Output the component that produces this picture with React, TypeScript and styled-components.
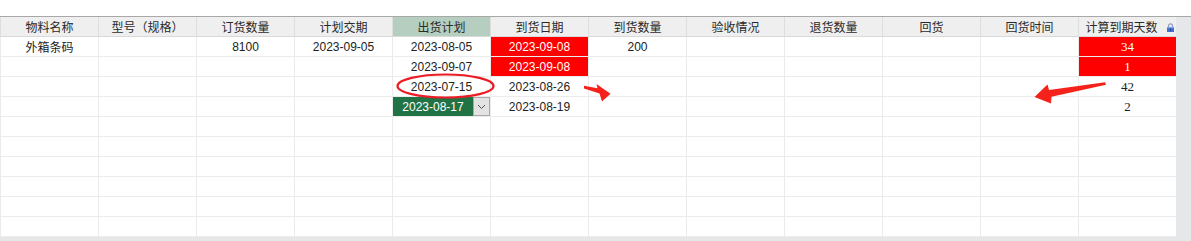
import React from "react";
import styled, { createGlobalStyle } from "styled-components";

const GlobalStyle = createGlobalStyle`
  html, body {
    margin: 0;
    padding: 0;
    background: #ffffff;
  }
  body {
    font-family: "Liberation Sans", "Noto Sans CJK SC", sans-serif;
  }
`;

type CellData = {
  text?: string;
  alert?: boolean;
  serif?: boolean;
  editor?: boolean;
};

const headers = [
  "物料名称",
  "型号（规格）",
  "订货数量",
  "计划交期",
  "出货计划",
  "到货日期",
  "到货数量",
  "验收情况",
  "退货数量",
  "回货",
  "回货时间",
  "计算到期天数",
];

const filled: CellData[][] = [
  [
    { text: "外箱条码" },
    {},
    { text: "8100" },
    { text: "2023-09-05" },
    { text: "2023-08-05" },
    { text: "2023-09-08", alert: true },
    { text: "200" },
    {},
    {},
    {},
    {},
    { text: "34", alert: true, serif: true },
  ],
  [
    {},
    {},
    {},
    {},
    { text: "2023-09-07" },
    { text: "2023-09-08", alert: true },
    {},
    {},
    {},
    {},
    {},
    { text: "1", alert: true, serif: true },
  ],
  [
    {},
    {},
    {},
    {},
    { text: "2023-07-15" },
    { text: "2023-08-26" },
    {},
    {},
    {},
    {},
    {},
    { text: "42", serif: true },
  ],
  [
    {},
    {},
    {},
    {},
    { text: "2023-08-17", editor: true },
    { text: "2023-08-19" },
    {},
    {},
    {},
    {},
    {},
    { text: "2", serif: true },
  ],
];

const emptyRow: CellData[] = headers.map(() => ({}));
const rows: CellData[][] = [
  ...filled,
  ...Array.from({ length: 6 }, () => emptyRow),
];

const LockIcon = () => (
  <svg width="9" height="9" viewBox="0 0 9 9">
    <path
      d="M2.5 4.5V2.8a2 2 0 0 1 4 0v1.7"
      fill="none"
      stroke="#8ea0c8"
      strokeWidth="1.3"
    />
    <rect x="1" y="4" width="7" height="5" fill="#3f6fd0" />
    <rect x="1" y="4" width="7" height="1.2" fill="#7da0e8" />
    <rect x="4" y="5.8" width="1" height="2" fill="#1c3f8c" />
  </svg>
);

const App = () => {
  return (
    <Page>
      <GlobalStyle />
      <TopStrip />
      <Frame>
        <Grid>
          {headers.map((h, i) => (
            <HeaderCell key={h} $active={i === 4} $locked={i === 11}>
              {h}
              {i === 11 && (
                <Lock>
                  <LockIcon />
                </Lock>
              )}
            </HeaderCell>
          ))}
          {rows.map((row, r) =>
            row.map((c, i) =>
              c.editor ? (
                <Cell key={`${r}-${i}`}>
                  <Editor>
                    <EditValue>{c.text}</EditValue>
                    <DropButton>
                      <svg width="9" height="6" viewBox="0 0 9 6">
                        <path
                          d="M1 1l3.5 3.5L8 1"
                          fill="none"
                          stroke="#555"
                          strokeWidth="1"
                        />
                      </svg>
                    </DropButton>
                  </Editor>
                </Cell>
              ) : (
                <Cell
                  key={`${r}-${i}`}
                  $alert={c.alert}
                  $serif={c.serif}
                  $cjk={i === 0}
                >
                  {c.text}
                </Cell>
              )
            )
          )}
        </Grid>
      </Frame>
      <Marks viewBox="0 0 1191 241" width="1191" height="241">
        <ellipse
          cx="445.5"
          cy="86"
          rx="48"
          ry="11.5"
          fill="none"
          stroke="#ec1c24"
          strokeWidth="2.2"
        />
        <polygon
          points="584,85.8 597.5,88.2 596.5,84 610.5,93.8 602,101.5 599.5,93.5 584,88.6"
          fill="#f5221b"
        />
        <polygon
          points="1105,82.3 1106,84.8 1051.5,96.8 1051,103.5 1034.5,97 1047.5,84.6 1049,90"
          fill="#f5221b"
        />
      </Marks>
    </Page>
  );
};

export default App;

const Page = styled.div`
  position: relative;
  width: 1191px;
  height: 241px;
  overflow: hidden;
`;

const TopStrip = styled.div`
  height: 16px;
  background: #ffffff;
`;

const Frame = styled.div`
  display: flex;
  align-items: flex-start;
  height: 224px;
  border-top: 1px solid #a8a8a8;
  background: #e6e7e9;
`;

const Grid = styled.div`
  display: grid;
  grid-template-columns: repeat(12, 98px);
  grid-auto-rows: 20px;
  width: 1176px;
  background: #ffffff;
`;

const HeaderCell = styled.div<{ $active?: boolean; $locked?: boolean }>`
  position: relative;
  display: flex;
  align-items: center;
  justify-content: center;
  box-sizing: border-box;
  padding-right: ${(p) => (p.$locked ? "12px" : "0")};
  border-left: 1px solid #dedede;
  border-bottom: 1px solid #d9d9d9;
  background: ${(p) => (p.$active ? "#b5cebf" : "#efefef")};
  color: #2a2a2a;
  font-family: "Noto Sans CJK SC", sans-serif;
  font-size: 12px;
  white-space: nowrap;
`;

const Lock = styled.span`
  position: absolute;
  right: 1px;
  top: 6px;
  display: flex;
`;

const Cell = styled.div<{ $alert?: boolean; $serif?: boolean; $cjk?: boolean }>`
  display: flex;
  align-items: center;
  justify-content: center;
  box-sizing: border-box;
  border-left: 1px solid #ebebeb;
  border-bottom: 1px solid #ebebeb;
  background: ${(p) => (p.$alert ? "#ff0000" : "#ffffff")};
  color: ${(p) => (p.$alert ? "#ffffff" : "#222222")};
  font-family: ${(p) =>
    p.$serif
      ? '"Liberation Serif", serif'
      : p.$cjk
      ? '"Noto Sans CJK SC", sans-serif'
      : '"Liberation Sans", sans-serif'};
  font-size: ${(p) => (p.$serif ? "13px" : "12px")};
  white-space: nowrap;
`;

const Editor = styled.div`
  display: flex;
  width: 100%;
  height: 100%;
`;

const EditValue = styled.div`
  flex: 1;
  display: flex;
  align-items: center;
  justify-content: center;
  background: #217346;
  color: #ffffff;
  font-family: "Liberation Sans", sans-serif;
  font-size: 12px;
`;

const DropButton = styled.div`
  width: 17px;
  display: flex;
  align-items: center;
  justify-content: center;
  box-sizing: border-box;
  border: 1px solid #a9a9a9;
  background: #e3e3e3;
`;

const Marks = styled.svg`
  position: absolute;
  left: 0;
  top: 0;
  pointer-events: none;
`;
